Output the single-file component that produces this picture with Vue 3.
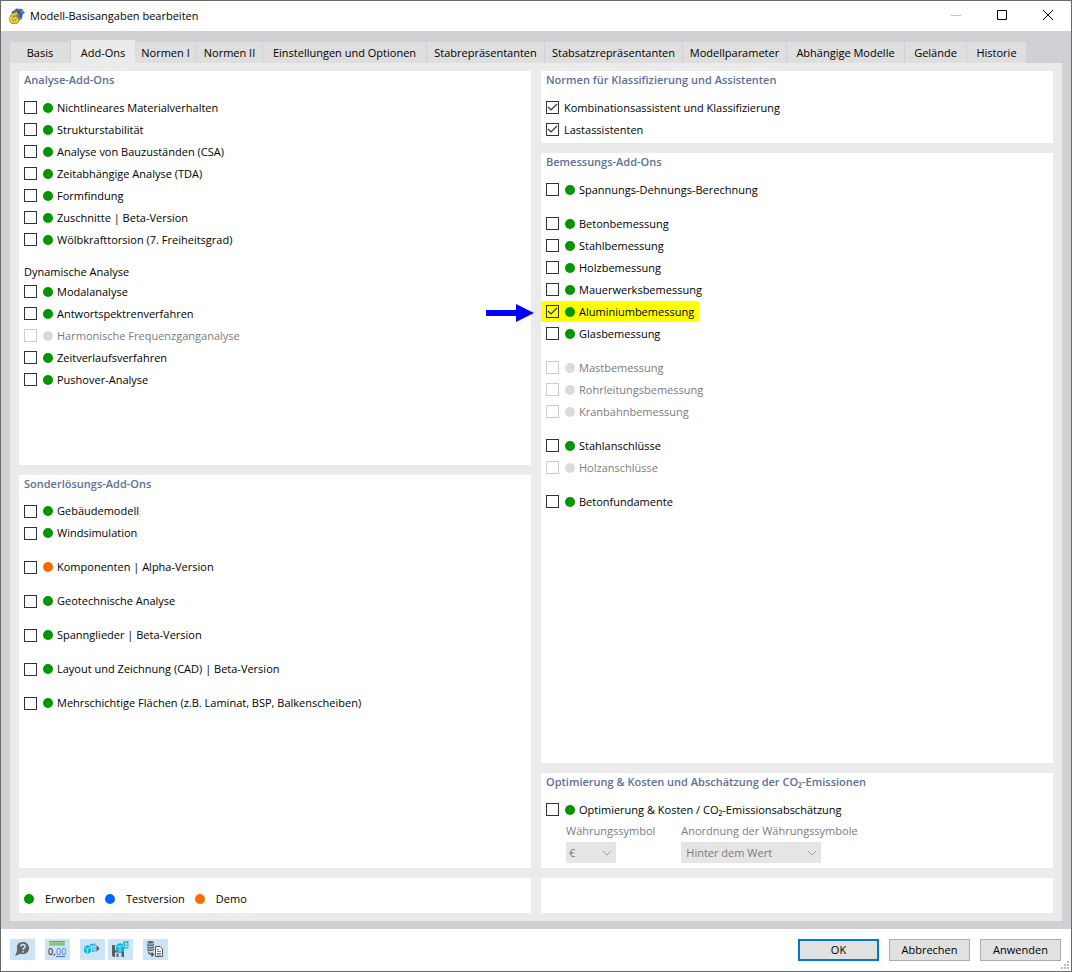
<script setup>
import { ref } from 'vue'

const tabs = [
  { label: 'Basis', width: 61 },
  { label: 'Add-Ons', width: 64 },
  { label: 'Normen I', width: 62 },
  { label: 'Normen II', width: 66 },
  { label: 'Einstellungen und Optionen', width: 164 },
  { label: 'Stabrepräsentanten', width: 118 },
  { label: 'Stabsatzrepräsentanten', width: 138 },
  { label: 'Modellparameter', width: 104 },
  { label: 'Abhängige Modelle', width: 118 },
  { label: 'Gelände', width: 62 },
  { label: 'Historie', width: 60 },
]
const activeTab = ref('Add-Ons')

const item = (label, extra = {}) => ({ label, dot: 'green', checked: false, ...extra })
const locked = { dot: 'none', disabled: true }

const leftPanels = ref([
  {
    title: 'Analyse-Add-Ons',
    items: [
      item('Nichtlineares Materialverhalten'),
      item('Strukturstabilität'),
      item('Analyse von Bauzuständen (CSA)'),
      item('Zeitabhängige Analyse (TDA)'),
      item('Formfindung'),
      item('Zuschnitte | Beta-Version'),
      item('Wölbkrafttorsion (7. Freiheitsgrad)'),
      item('Modalanalyse', { section: 'Dynamische Analyse' }),
      item('Antwortspektrenverfahren'),
      item('Harmonische Frequenzganganalyse', locked),
      item('Zeitverlaufsverfahren'),
      item('Pushover-Analyse'),
    ],
  },
  {
    title: 'Sonderlösungs-Add-Ons',
    items: [
      item('Gebäudemodell'),
      item('Windsimulation'),
      item('Komponenten | Alpha-Version', { dot: 'orange', gap: true }),
      item('Geotechnische Analyse', { gap: true }),
      item('Spannglieder | Beta-Version', { gap: true }),
      item('Layout und Zeichnung (CAD) | Beta-Version', { gap: true }),
      item('Mehrschichtige Flächen (z.B. Laminat, BSP, Balkenscheiben)', { gap: true }),
    ],
  },
])

const rightPanels = ref([
  {
    title: 'Normen für Klassifizierung und Assistenten',
    fit: true,
    items: [
      item('Kombinationsassistent und Klassifizierung', { dot: null, checked: true }),
      item('Lastassistenten', { dot: null, checked: true }),
    ],
  },
  {
    title: 'Bemessungs-Add-Ons',
    items: [
      item('Spannungs-Dehnungs-Berechnung'),
      item('Betonbemessung', { gap: true }),
      item('Stahlbemessung'),
      item('Holzbemessung'),
      item('Mauerwerksbemessung'),
      item('Aluminiumbemessung', { checked: true, marked: true }),
      item('Glasbemessung'),
      item('Mastbemessung', { ...locked, gap: true }),
      item('Rohrleitungsbemessung', locked),
      item('Kranbahnbemessung', locked),
      item('Stahlanschlüsse', { gap: true }),
      item('Holzanschlüsse', locked),
      item('Betonfundamente', { gap: true }),
    ],
  },
  {
    title: 'Optimierung & Kosten und Abschätzung der CO₂-Emissionen',
    fit: true,
    currency: true,
    items: [item('Optimierung & Kosten / CO₂-Emissionsabschätzung')],
  },
])

const columns = [leftPanels, rightPanels]
const legend = [
  { label: 'Erworben', dot: 'green' },
  { label: 'Testversion', dot: 'blue' },
  { label: 'Demo', dot: 'orange' },
]
</script>

<template>
  <div class="window">
    <header class="titlebar">
      <svg class="app-icon" width="16" height="16" viewBox="0 0 16 16" aria-hidden="true">
        <path d="M2 5 L7 .5 L13 1 L16 5 L13.500 6 L13 11 L9 13 L6 5Z" fill="#5b7db5" />
        <path d="M3 4 L12 5 M7 1 L13 9 M12 1 L8 6 M11 9 L14 5" stroke="#2c4678" stroke-width="1" fill="none" />
        <path d="M8.500 5.500 C4.500 5.500 2 8 2 11 C2 13.500 3.500 14.500 5.500 14.500 C9 14.500 9.500 10.500 6.500 10 C5 9.800 4 10.500 3.500 11.500" fill="none" stroke="#8d7418" stroke-width="3.400" />
        <path d="M8.500 5.500 C4.500 5.500 2 8 2 11 C2 13.500 3.500 14.500 5.500 14.500 C9 14.500 9.500 10.500 6.500 10 C5 9.800 4 10.500 3.500 11.500" fill="none" stroke="#f8d22f" stroke-width="2" />
      </svg>
      <h1>Modell-Basisangaben bearbeiten</h1>
      <div class="caption">
        <button type="button" aria-label="Minimieren" disabled>
          <svg width="12" height="12" viewBox="0 0 12 12"><path d="M1 5.500H11" stroke="#c4c4c4" /></svg>
        </button>
        <button type="button" aria-label="Maximieren">
          <svg width="12" height="12" viewBox="0 0 12 12"><path d="M1.500 .5H10.500V9.500H1.500Z" stroke="#000" fill="none" /></svg>
        </button>
        <button type="button" aria-label="Schließen">
          <svg width="12" height="12" viewBox="0 0 12 12"><path d="M1 0L11 10M11 0L1 10" stroke="#000" fill="none" /></svg>
        </button>
      </div>
    </header>

    <main class="body">
      <nav class="tabs" role="tablist">
        <button
          v-for="tab in tabs" :key="tab.label" type="button" role="tab"
          :aria-selected="tab.label === activeTab"
          :class="['tab', { active: tab.label === activeTab }]"
          :style="{ minWidth: tab.width + 'px' }"
          @click="activeTab = tab.label"
        >{{ tab.label }}</button>
      </nav>

      <div class="page">
        <div class="columns">
          <div v-for="(panels, c) in columns" :key="c" class="column">
            <section v-for="(panel, p) in panels.value" :key="panel.title" :class="['panel', { fit: panel.fit }]">
              <h2>{{ panel.title }}</h2>
              <template v-for="(it, i) in panel.items" :key="it.label">
                <h3 v-if="it.section">{{ it.section }}</h3>
                <div :class="['row', { gap: it.gap }]">
                  <svg v-if="it.marked" class="arrow" width="48" height="20" viewBox="0 0 48 20" aria-hidden="true">
                    <path d="M0 7H30V1L48 10L30 19V13H0Z" fill="#0000ff" />
                  </svg>
                  <label :class="['option', { marked: it.marked, disabled: it.disabled }]" :for="`opt-${c}-${p}-${i}`">
                    <span class="box">
                      <input :id="`opt-${c}-${p}-${i}`" v-model="it.checked" type="checkbox" :disabled="it.disabled">
                      <svg v-if="it.checked" width="13" height="13" viewBox="0 0 13 13"><path d="M2 6L5 9L11 3" stroke="#333" stroke-width="1.200" fill="none" /></svg>
                    </span>
                    <span v-if="it.dot" :class="['dot', it.dot]"></span>
                    <span :class="['text', { plain: !it.dot }]">{{ it.label }}</span>
                  </label>
                </div>
              </template>
              <div v-if="panel.currency" class="fields">
                <div class="field symbol">
                  <label for="symbol">Währungssymbol</label>
                  <span class="select">
                    <select id="symbol" disabled><option>€</option></select>
                    <svg width="10" height="6" viewBox="0 0 10 6"><path d="M1 1L5 5L9 1" stroke="#a0a0a0" fill="none" /></svg>
                  </span>
                </div>
                <div class="field order">
                  <label for="order">Anordnung der Währungssymbole</label>
                  <span class="select">
                    <select id="order" disabled><option>Hinter dem Wert</option></select>
                    <svg width="10" height="6" viewBox="0 0 10 6"><path d="M1 1L5 5L9 1" stroke="#a0a0a0" fill="none" /></svg>
                  </span>
                </div>
              </div>
            </section>
          </div>
        </div>
        <div class="info">
          <div class="legend">
            <span v-for="entry in legend" :key="entry.label" class="legend-item">
              <span :class="['dot', entry.dot]"></span>{{ entry.label }}
            </span>
          </div>
          <div class="legend"></div>
        </div>
      </div>
    </main>

    <footer class="footer">
      <div class="tools">
        <button type="button" aria-label="Hilfe">
          <svg width="25" height="21" viewBox="0 0 25 21">
            <path d="M13 3C8.500 3 6.500 6 7 9C7.200 11 7.500 12 5 17L10.500 14.800C16 16.500 19.500 12.500 19 8.500C18.700 5 16 3 13 3Z" fill="#656565" />
            <path d="M10.800 7.500C11 4.800 15.500 5 15.200 7.500C15 9 13 9 13 10.800M13 12V13.500" stroke="#cce4f7" stroke-width="1.600" fill="none" />
          </svg>
        </button>
        <button type="button" aria-label="Einheiten und Dezimalstellen" class="spaced">
          <svg width="25" height="21" viewBox="0 0 25 21">
            <path d="M4 2H20V7H4Z" fill="#97d98c" />
            <path d="M4 2.500H20M6.500 4V6M9.500 4V6M12.500 4V6M15.500 4V6M18.500 4V6" stroke="#61a856" fill="none" />
            <text x="3" y="16" class="digits">0,</text>
            <text x="11" y="16" class="digits decimals">00</text>
            <path d="M11 17.500H20" stroke="#4d75d9" />
          </svg>
        </button>
        <button type="button" aria-label="Modell übernehmen" class="spaced">
          <svg width="25" height="21" viewBox="0 0 25 21">
            <path d="M4 8L7.500 6L11 7.500V13L7.500 15L4 13Z" fill="#12b7e4" />
            <path d="M10 5L15.500 4.500V12.500L12 13V7L10 6.500Z" fill="#12b7e4" />
            <path d="M4.500 8.500L7.500 10L11 8M7.500 10V14.500M12 7.500H15.500M12 10H15.500M13.800 5.500V12.500" stroke="#c0e9f8" stroke-width=".8" fill="none" />
            <path d="M16.500 6L19.500 9.500L16.500 13Z" fill="#555" />
          </svg>
        </button>
        <button type="button" aria-label="Als Vorgabe speichern" class="close-pair">
          <svg width="25" height="21" viewBox="0 0 25 21">
            <path d="M4 6H14L16 8V18H5.500L4 16.500Z" fill="#5c5c5c" />
            <path d="M7 6H13V11H7ZM7 13.500H13.500V18H7Z" fill="#cce4f7" />
            <path d="M8.500 14.500H10.500V18H8.500Z" fill="#5c5c5c" />
            <path d="M8 6L12 4L15 5V2.500L20.500 2V9L16 10V12L12 14L8 12Z" fill="#12b7e4" />
            <path d="M8.500 6.500L12 8L15.500 6M12 8V13M15.500 5H20.500M15.500 7.500H20.500M18 3V9" stroke="#c0e9f8" stroke-width=".8" fill="none" />
          </svg>
        </button>
        <button type="button" aria-label="Aus Datenbank kopieren" class="spaced">
          <svg width="25" height="21" viewBox="0 0 25 21">
            <path d="M4 3.500C4 1.500 11 1.500 11 3.500V10.500C11 12.500 4 12.500 4 10.500Z" fill="#666" />
            <path d="M4 4C5 5.500 10 5.500 11 4M4 6.500C5 8 10 8 11 6.500M4 9C5 10.500 10 10.500 11 9" stroke="#cce4f7" stroke-width=".9" fill="none" />
            <path d="M5.500 12.500C5.500 14.500 7 15.500 10.500 15.500M8.500 13.500L10.500 15.500L8.500 17.500" stroke="#555" stroke-width="1.300" fill="none" />
            <path d="M12.500 7.500H17L19.500 10V17.500H12.500Z" fill="#fff" stroke="#555" />
            <path d="M14 10.500H16M14 12.500H18M14 14.500H18M14 16H18" stroke="#777" fill="none" />
          </svg>
        </button>
      </div>
      <div class="actions">
        <button type="button" class="primary">OK</button>
        <button type="button">Abbrechen</button>
        <button type="button">Anwenden</button>
      </div>
      <svg class="grip" width="8" height="8" viewBox="0 0 8 8" aria-hidden="true">
        <path d="M6 0H8V2H6ZM3 3H5V5H3ZM6 3H8V5H6ZM0 6H2V8H0ZM3 6H5V8H3ZM6 6H8V8H6Z" fill="#bcbcbc" />
      </svg>
    </footer>
  </div>
</template>

<style>
body {
  margin: 0;
}
</style>

<style scoped>
.window {
  box-sizing: border-box;
  display: flex;
  flex-direction: column;
  min-height: 100vh;
  border: 1px solid #696969;
  background: #fff;
  color: #000;
  font: 11px/18px "Open Sans", "Noto Sans", sans-serif;
}

h1, h2, h3 {
  margin: 0;
  font-size: inherit;
  font-weight: 400;
}

button, select {
  margin: 0;
  padding: 0;
  border: 0;
  border-radius: 0;
  color: inherit;
  font: inherit;
}

svg {
  display: block;
}

.titlebar {
  display: flex;
  align-items: center;
  height: 30px;
  padding-left: 8px;
}

.titlebar h1 {
  flex: 1;
  margin-left: 5px;
}

.caption {
  display: flex;
  align-self: stretch;
}

.caption button {
  display: flex;
  align-items: center;
  justify-content: center;
  width: 46px;
  background: none;
}

.body {
  flex: 1;
  display: flex;
  flex-direction: column;
  padding: 9px 9px 8px;
  background: #d1d0d5;
}

.tabs {
  display: flex;
  align-items: flex-end;
}

.tab {
  box-sizing: border-box;
  height: 21px;
  padding: 0 4px;
  border-right: 1px solid #d1d0d5;
  background: #dedede;
  white-space: nowrap;
}

.tab.active {
  height: 23px;
  padding-top: 2px;
  background: #ebebeb;
  border-right: 0;
}

.page {
  flex: 1;
  display: flex;
  flex-direction: column;
  gap: 10px;
  padding: 8px 9px;
  background: #ebebeb;
}

.columns, .info {
  display: grid;
  grid-template-columns: 1fr 1fr;
  gap: 10px;
}

.columns {
  flex: 1;
}

.column {
  display: flex;
  flex-direction: column;
  gap: 10px;
}

.panel {
  flex: 1 1 0;
  padding: 0 5px 2px;
  background: #fff;
}

.panel.fit {
  flex: none;
}

h2 {
  margin-bottom: 8px;
  color: #5c6f99;
  font-weight: 600;
}

h3 {
  margin-top: 12px;
}

.row {
  position: relative;
  height: 22px;
}

.row.gap {
  margin-top: 12px;
}

.option {
  display: inline-flex;
  align-items: center;
  height: 21px;
  margin-left: -5px;
  padding: 0 5px;
  vertical-align: top;
}

.option.marked {
  background: #ffff00;
}

.arrow {
  position: absolute;
  top: 2px;
  left: -60px;
}

.box {
  position: relative;
  width: 13px;
  height: 13px;
}

.box input {
  appearance: none;
  box-sizing: border-box;
  display: block;
  width: 13px;
  height: 13px;
  margin: 0;
  border: 1px solid #333;
}

.box svg {
  position: absolute;
  top: 0;
  left: 0;
  pointer-events: none;
}

.option.disabled {
  color: #7b7b7b;
}

.disabled .box input {
  border-color: #ccc;
}

.dot {
  width: 10px;
  height: 10px;
  border-radius: 50%;
}

.option .dot {
  margin-left: 6px;
}

.dot.green { background: #009600; }
.dot.orange { background: #ff6a00; }
.dot.blue { background: #0066ff; }
.dot.none { background: #dadae0; }

.text {
  margin-left: 4px;
  white-space: nowrap;
}

.text.plain {
  margin-left: 5px;
}

.fields {
  display: flex;
  gap: 26px;
  margin: 1px 0 3px 20px;
  color: #7b7b7b;
}

.field label {
  display: block;
  margin-bottom: 2px;
  white-space: nowrap;
}

.select {
  position: relative;
  display: block;
  width: 140px;
}

.symbol .select {
  width: 50px;
}

.select select {
  appearance: none;
  display: block;
  width: 100%;
  height: 21px;
  padding: 0 20px 0 5px;
  background: #e5e5e5;
  opacity: 1;
}

.symbol select {
  padding-left: 3px;
}

.select svg {
  position: absolute;
  top: 8px;
  right: 4px;
  pointer-events: none;
}

.legend {
  box-sizing: border-box;
  display: flex;
  align-items: center;
  gap: 10px;
  height: 35px;
  padding: 6px 5px 0;
  background: #fff;
}

.legend-item {
  display: flex;
  align-items: center;
  gap: 11px;
}

.footer {
  position: relative;
  display: flex;
  justify-content: space-between;
  align-items: flex-start;
  height: 32px;
  padding: 10px 10px 0 9px;
}

.tools, .actions {
  display: flex;
}

.tools button {
  width: 25px;
  height: 21px;
  background: #cce4f7;
}

.tools .spaced {
  margin-left: 10px;
}

.tools .close-pair {
  margin-left: 3px;
}

.digits {
  font: 9px "Open Sans", sans-serif;
  fill: #000;
}

.decimals {
  fill: #4d75d9;
}

.actions {
  gap: 10px;
}

.actions button {
  width: 81px;
  height: 22px;
  border: 1px solid #adadad;
  background: #e1e1e1;
}

.actions .primary {
  border: 2px solid #0078d7;
}

.grip {
  position: absolute;
  right: 2px;
  bottom: 2px;
}
</style>
